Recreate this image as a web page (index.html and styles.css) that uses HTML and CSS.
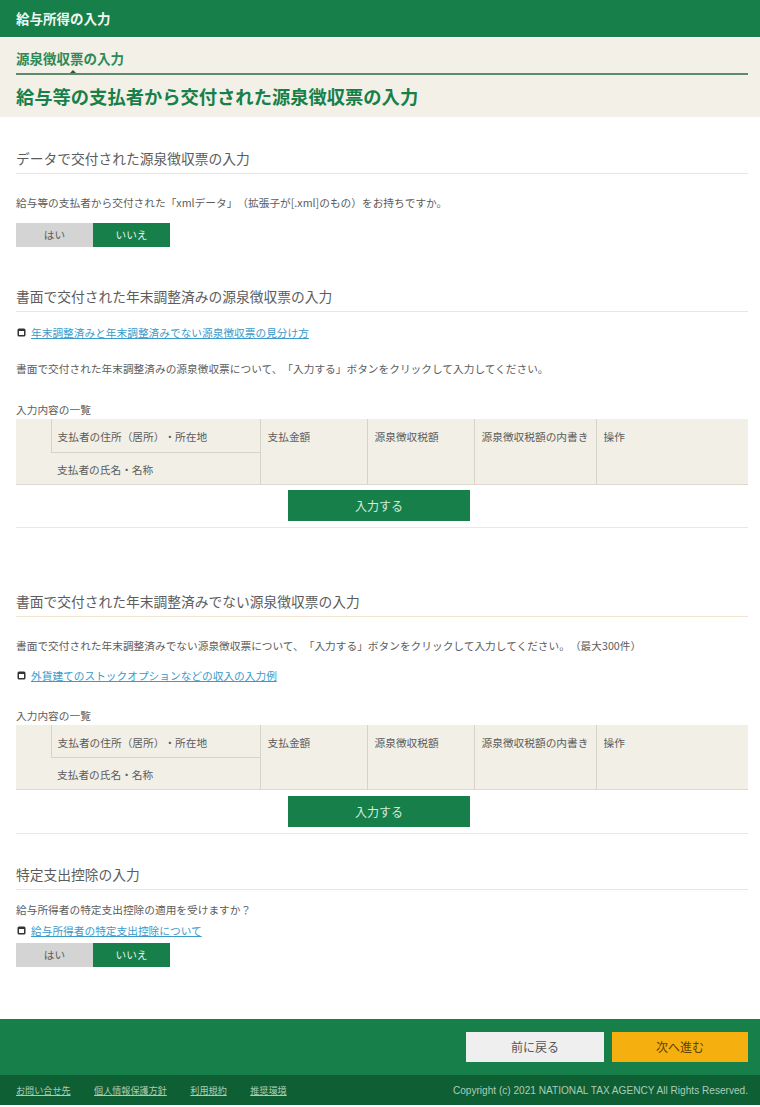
FILE: index.html
```html
<!DOCTYPE html>
<html lang="ja">
<head>
    <meta charset="UTF-8">
    <title>給与所得の入力</title>
<link rel="stylesheet" href="styles.css">
</head>
<body>

    <div class="topBar">給与所得の入力</div>

    <div class="titleBand">
        <div class="stepName">源泉徴収票の入力</div>
        <h1 class="pageTitle">給与等の支払者から交付された源泉徴収票の入力</h1>
    </div>

    <div class="mainDiv">
        <div class="section firstSection">
            <h2 class="secTitle">データで交付された源泉徴収票の入力</h2>
            <p class="text xmlText">給与等の支払者から交付された「xmlデータ」（拡張子が[.xml]のもの）をお持ちですか。</p>
            <div class="toggle">
                <span class="toggleBtn">はい</span>
                <span class="toggleBtn toggleOn">いいえ</span>
            </div>
        </div>

        <div class="section secondSection">
            <h2 class="secTitle">書面で交付された年末調整済みの源泉徴収票の入力</h2>
            <div class="linkRow linkRowTop">
                <svg class="linkIcon" width="9" height="9" viewBox="0 0 9 9"><rect x="0.5" y="0.5" width="8" height="8" rx="1.5" fill="#333"/><rect x="2" y="3" width="5" height="4" fill="#fff"/></svg>
                <a class="link" href="#">年末調整済みと年末調整済みでない源泉徴収票の見分け方</a>
            </div>
            <p class="text noteText">書面で交付された年末調整済みの源泉徴収票について、「入力する」ボタンをクリックして入力してください。</p>
            <div class="tableCaption captionOne">入力内容の一覧</div>
            <table class="listTable">
                <tr>
                    <th class="colBlank" rowspan="2"></th>
                    <th class="colName">支払者の住所（居所）・所在地</th>
                    <th class="colPay" rowspan="2">支払金額</th>
                    <th class="colTax" rowspan="2">源泉徴収税額</th>
                    <th class="colNote" rowspan="2">源泉徴収税額の内書き</th>
                    <th rowspan="2">操作</th>
                </tr>
                <tr>
                    <th class="colName">支払者の氏名・名称</th>
                </tr>
            </table>
            <div class="inputRow"><a class="inputBtn" href="#">入力する</a></div>
        </div>

        <div class="section thirdSection">
            <h2 class="secTitle">書面で交付された年末調整済みでない源泉徴収票の入力</h2>
            <p class="text limitText">書面で交付された年末調整済みでない源泉徴収票について、「入力する」ボタンをクリックして入力してください。（最大300件）</p>
            <div class="linkRow linkRowMid">
                <svg class="linkIcon" width="9" height="9" viewBox="0 0 9 9"><rect x="0.5" y="0.5" width="8" height="8" rx="1.5" fill="#333"/><rect x="2" y="3" width="5" height="4" fill="#fff"/></svg>
                <a class="link" href="#">外貨建てのストックオプションなどの収入の入力例</a>
            </div>
            <div class="tableCaption captionTwo">入力内容の一覧</div>
            <table class="listTable">
                <tr>
                    <th class="colBlank" rowspan="2"></th>
                    <th class="colName">支払者の住所（居所）・所在地</th>
                    <th class="colPay" rowspan="2">支払金額</th>
                    <th class="colTax" rowspan="2">源泉徴収税額</th>
                    <th class="colNote" rowspan="2">源泉徴収税額の内書き</th>
                    <th rowspan="2">操作</th>
                </tr>
                <tr>
                    <th class="colName">支払者の氏名・名称</th>
                </tr>
            </table>
            <div class="inputRow"><a class="inputBtn" href="#">入力する</a></div>
        </div>

        <div class="section lastSection">
            <h2 class="secTitle">特定支出控除の入力</h2>
            <p class="text askText">給与所得者の特定支出控除の適用を受けますか？</p>
            <div class="linkRow linkRowLast">
                <svg class="linkIcon" width="9" height="9" viewBox="0 0 9 9"><rect x="0.5" y="0.5" width="8" height="8" rx="1.5" fill="#333"/><rect x="2" y="3" width="5" height="4" fill="#fff"/></svg>
                <a class="link" href="#">給与所得者の特定支出控除について</a>
            </div>
            <div class="toggle toggleLast">
                <span class="toggleBtn">はい</span>
                <span class="toggleBtn toggleOn">いいえ</span>
            </div>
        </div>
    </div>

    <div class="navBar">
        <a class="navBtn backBtn" href="#">前に戻る</a>
        <a class="navBtn nextBtn" href="#">次へ進む</a>
    </div>

    <div class="footer">
        <div class="footLinks">
            <a href="#">お問い合せ先</a>
            <a href="#">個人情報保護方針</a>
            <a href="#">利用規約</a>
            <a href="#">推奨環境</a>
        </div>
        <div class="copyright">Copyright (c) 2021 NATIONAL TAX AGENCY All Rights Reserved.</div>
    </div>

</body>
</html>
```

FILE: styles.css
```css
body{
    margin: 0;
    background: #fff;
    color: #5c5c5c;
    font-family: "Noto Sans CJK JP", "Noto Sans", sans-serif;
    font-size: 10.7px;
    text-spacing-trim: space-all;
}
a{
    text-decoration: none;
}
.topBar{
    height: 37px;
    line-height: 36px;
    padding-left: 16px;
    background: #177f4a;
    color: #f0f7f2;
    font-size: 13.5px;
    font-weight: bold;
}
.titleBand{
    height: 79px;
    margin-top: 1px;
    padding-left: 16px;
    background: #f3f0e7;
}
.stepName{
    position: relative;
    height: 35px;
    line-height: 40px;
    border-bottom: 2px solid #5f8a6e;
    color: #2c8a58;
    font-size: 13.5px;
    font-weight: bold;
    margin-right: 12px;
}
/* little marker on the line, under the current step */
.stepName::after{
    content: "";
    position: absolute;
    left: 54px;
    bottom: 0;
    border-left: 3px solid transparent;
    border-right: 3px solid transparent;
    border-bottom: 3px solid #33543f;
}
.pageTitle{
    margin: 0;
    line-height: 42px;
    color: #177f4a;
    font-size: 18.3px;
    font-weight: bold;
}
.mainDiv{
    padding: 30px 12px 52px 16px;
}
.secondSection{
    margin-top: 38px;
    padding-bottom: 6px;
    border-bottom: 1px solid #e8e8e4;
}
.thirdSection{
    margin-top: 62px;
    padding-bottom: 6px;
    border-bottom: 1px solid #e8e8e4;
}
.lastSection{
    margin-top: 29px;
}
.secTitle{
    margin: 0;
    height: 26px;
    line-height: 22px;
    border-bottom: 1px solid #f3e6d0;
    font-size: 13.75px;
    font-weight: normal;
}
.text{
    margin: 0;
    line-height: 16px;
    white-space: nowrap;
}
.xmlText{
    margin-top: 21px;
}
.noteText{
    margin-top: 21px;
}
.limitText{
    margin-top: 21px;
}
.askText{
    margin-top: 12px;
}
.toggle{
    display: flex;
    margin-top: 12px;
}
.toggleLast{
    margin-top: 5px;
}
.toggleBtn{
    width: 77px;
    height: 24px;
    line-height: 24px;
    text-align: center;
    background: #d4d4d4;
}
.toggleOn{
    background: #177f4a;
    color: #e4f3e8;
}
.linkRow{
    display: flex;
    align-items: center;
    gap: 5px;
    height: 16px;
}
.linkRowTop{
    margin-top: 12px;
}
.linkRowMid{
    margin-top: 14px;
}
.linkRowLast{
    margin-top: 4px;
}
.linkIcon{
    margin-left: 1px;
}
.link{
    color: #3b9ac9;
    text-decoration: underline;
}
.tableCaption{
    line-height: 14px;
}
.captionOne{
    margin-top: 26px;
}
.captionTwo{
    margin-top: 25px;
}
.listTable{
    width: 732px;
    height: 65px;
    margin-top: 2px;
    table-layout: fixed;
    border-collapse: collapse;
    background: #f1efe6;
    border-bottom: 1px solid #dcdad0;
}
.listTable th{
    box-sizing: border-box;
    padding: 10px 4px 0 7px;
    vertical-align: top;
    text-align: left;
    font-weight: normal;
    line-height: 16px;
    border-left: 1px solid #d6d4c8;
    white-space: nowrap;
}
.listTable th:first-child{
    border-left: 0;
}
.listTable .colName{
    height: 33px;
    padding-left: 6px;
    border-bottom: 1px solid #d6d4c8;
}
.listTable tr + tr .colName{
    height: 32px;
    padding-top: 9px;
    border-bottom: 0;
}
.colBlank{
    width: 35px;
}
.colName{
    width: 209px;
}
.colPay, .colTax{
    width: 107px;
}
.colNote{
    width: 122px;
}
.inputRow{
    display: flex;
    justify-content: center;
    margin-top: 5px;
}
.thirdSection .inputRow{
    margin-top: 6px;
}
.inputBtn{
    width: 182px;
    height: 31px;
    line-height: 31px;
    margin-right: 6px;
    text-align: center;
    background: #177f4a;
    color: #d4ecdc;
    font-size: 12px;
}
.navBar{
    display: flex;
    justify-content: flex-end;
    gap: 8px;
    height: 43px;
    padding: 13px 12px 0 0;
    background: #177f4a;
}
.navBtn{
    height: 30px;
    line-height: 30px;
    text-align: center;
    font-size: 12px;
}
.backBtn{
    width: 138px;
    background: #efefef;
    color: #555;
}
.nextBtn{
    width: 136px;
    background: #f5b00f;
    color: #5a4300;
}
.footer{
    display: flex;
    justify-content: space-between;
    align-items: center;
    height: 30px;
    padding: 0 12px 0 16px;
    background: #0f5f35;
    color: #a9cdb8;
    font-size: 9.1px;
}
.footLinks{
    display: flex;
    gap: 23.5px;
}
.footLinks a{
    color: #a9cdb8;
    text-decoration: underline;
}
.copyright{
    font-family: "Liberation Sans", sans-serif;
    font-size: 10.1px;
}
```
